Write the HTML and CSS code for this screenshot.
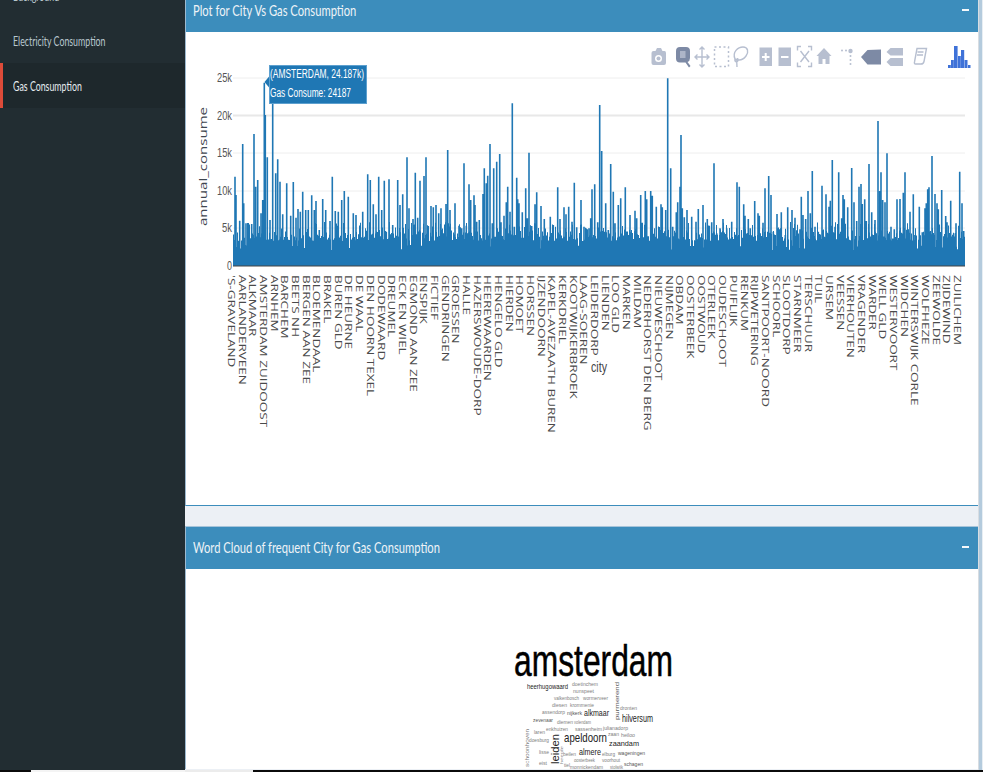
FILE: index.html
```html
<!DOCTYPE html>
<html lang="en">
<head>
  <meta charset="UTF-8" />
  <title>Gas Consumption</title>
  <link rel="stylesheet" href="styles.css">
</head>
<body>
  <div class="app">
    <aside class="sidebar">
      <ul class="menu">
        <li class="menu-item"><span class="menu-label">Background</span></li>
        <li class="menu-item"><span class="menu-label">Electricity Consumption</span></li>
        <li class="menu-item active"><span class="menu-label">Gas Consumption</span></li>
      </ul>
    </aside>

    <main class="content">
      <section class="panel panel-plot">
        <div class="panel-header">
          <h3 class="panel-title">Plot for City Vs Gas Consumption</h3>
          <span class="collapse"></span>
        </div>
        <div class="panel-body">
          <!-- viewBox uses screen coordinates so values can be read off the plot -->
          <svg class="chart" viewBox="186 32 792 473">
            <g class="grid">
              <line x1="233" x2="965" y1="78" y2="78" />
              <line class="grid-strong" x1="233" x2="965" y1="115.5" y2="115.5" />
              <line x1="233" x2="965" y1="153" y2="153" />
              <line x1="233" x2="965" y1="191" y2="191" />
              <line x1="233" x2="965" y1="228" y2="228" />
            </g>
            <path id="bars" class="bars" d="" />
            <line class="baseline" x1="233" x2="965" y1="266" y2="266" />

            <g class="ytick">
              <text x="217" y="82" textLength="15" lengthAdjust="spacingAndGlyphs">25k</text>
              <text x="217" y="120" textLength="15" lengthAdjust="spacingAndGlyphs">20k</text>
              <text x="217" y="157" textLength="15" lengthAdjust="spacingAndGlyphs">15k</text>
              <text x="217" y="195" textLength="15" lengthAdjust="spacingAndGlyphs">10k</text>
              <text x="222" y="232" textLength="10" lengthAdjust="spacingAndGlyphs">5k</text>
              <text x="227" y="270" textLength="5" lengthAdjust="spacingAndGlyphs">0</text>
            </g>
            <text class="axis-title" transform="translate(207 226) rotate(-90) scale(1 0.82)" textLength="119" lengthAdjust="spacingAndGlyphs">annual_consume</text>
            <text class="axis-city" x="591" y="372" textLength="16" lengthAdjust="spacingAndGlyphs">city</text>
            <g id="cities" class="xtick"></g>

            <g class="hover">
              <polygon points="264.5,82 269.5,76 269.5,88" />
              <rect x="269.5" y="65.5" width="97" height="38" />
              <text x="270" y="78" textLength="94" lengthAdjust="spacingAndGlyphs">(AMSTERDAM, 24.187k)</text>
              <text x="270" y="97" textLength="81" lengthAdjust="spacingAndGlyphs">Gas Consume: 24187</text>
            </g>

            <g class="modebar">
              <path d="M651.5 53q0-2 2-2h2l1.5-3h4l1.5 3h2q1.500 0 1.500 2v10q0 2-2 2h-10.500q-2 0-2-2z" />
              <circle class="mb-hole" cx="658.500" cy="58.500" r="3.500" />
              <circle cx="658.500" cy="58.500" r="2" />

              <path class="mb-active" d="M680 47h6q4 0 4 4v7q0 3-2.500 4l3 4-1.500 1.500-3.500-5h-5.500q-4 0-4-4v-7.500q0-4 4-4z" />
              <rect class="mb-lighter" x="680" y="51" width="5.500" height="7" />

              <path class="mb-line" d="M695 57h14M702 47v20M697.500 54.500l-2.500 2.500 2.500 2.500M706.500 54.500l2.500 2.500-2.500 2.500M699.500 49.500l2.500-2.500 2.500 2.500M699.500 64.500l2.500 2.500 2.500-2.500" />
              <rect class="mb-dash" x="714.500" y="47" width="14" height="19.500" />
              <path class="mb-line" d="M735 59c-3-7 3-12 8-12s6 5 3 9-7 5-11 3zM735 59c-1 3 3 4 3 1s-2-1-1 7" />

              <rect x="759.500" y="47.500" width="12.500" height="18.500" />
              <path class="mb-cut" d="M762 57h7.500M765.700 53v8" />
              <rect x="778.500" y="47.500" width="12.500" height="18.500" />
              <path class="mb-cut" d="M781 57h7.500" />

              <path class="mb-line" d="M801 46.500h-3.500v4M808 46.500h3.500v4M801 66.500h-3.500v-4M808 66.500h3.500v-4M800.500 51l8.500 11M809 51l-8.500 11" />
              <path d="M824 48l7.500 8h-2v8h-4v-5h-3v5h-4v-8h-2z" />

              <circle cx="842" cy="50.500" r="1" />
              <circle cx="846" cy="50.500" r="1" />
              <circle cx="850.500" cy="51" r="2.200" />
              <circle cx="850.500" cy="56" r="1" />
              <circle cx="850.500" cy="60" r="1" />
              <circle cx="850.500" cy="64" r="1" />

              <polygon class="mb-active" points="861,57 867.500,50 881,49.500 881,64.500 867.500,64.500" />
              <polygon points="886.500,52 890.500,48 903,48 903,55.500 890.500,55.500" />
              <polygon points="886.500,62 890.500,58 903,58 903,66 890.500,66" />
              <path class="mb-line" d="M917 48.500h9.500l-2.500 13q-.5 2.500-3 2.500h-5.500q-1.500 0-1-2zM917.500 52h6M917 55h6" />

              <g class="mb-logo">
                <rect x="948" y="65" width="2.800" height="3" />
                <rect x="951" y="60" width="2.800" height="8" />
                <rect x="954" y="46" width="3.600" height="22" />
                <rect x="958" y="56" width="2.800" height="12" />
                <rect x="961" y="50" width="3.200" height="18" />
                <rect x="964.500" y="60" width="3" height="8" />
                <rect x="968" y="65" width="2.500" height="3" />
              </g>
            </g>
          </svg>
        </div>
      </section>

      <section class="panel panel-cloud">
        <div class="panel-header">
          <h3 class="panel-title">Word Cloud of frequent City for Gas Consumption</h3>
          <span class="collapse"></span>
        </div>
        <div class="panel-body">
          <svg class="chart" viewBox="186 570 792 200">
            <text class="w0" x="514" y="677" font-size="44" textLength="159" lengthAdjust="spacingAndGlyphs">amsterdam</text>
            <text class="w1" x="527" y="690" font-size="8" textLength="41" lengthAdjust="spacingAndGlyphs">heerhugowaard</text>
            <text class="w3" x="572" y="687" font-size="6" textLength="26" lengthAdjust="spacingAndGlyphs">doetinchem</text>
            <text class="w3" x="573" y="694" font-size="5" textLength="21" lengthAdjust="spacingAndGlyphs">nunspeet</text>
            <text class="w3" x="554" y="701" font-size="5" textLength="25" lengthAdjust="spacingAndGlyphs">valkenbosch</text>
            <text class="w3" x="583" y="701" font-size="5" textLength="25" lengthAdjust="spacingAndGlyphs">wormerveer</text>
            <text class="w3" x="552" y="708" font-size="5" textLength="15" lengthAdjust="spacingAndGlyphs">diesen</text>
            <text class="w3" x="570" y="708" font-size="5" textLength="24" lengthAdjust="spacingAndGlyphs">krommenie</text>
            <text class="w3" x="542" y="715" font-size="5" textLength="23" lengthAdjust="spacingAndGlyphs">assendorp</text>
            <text class="w2" x="567" y="716" font-size="6" textLength="15" lengthAdjust="spacingAndGlyphs">nijkerk</text>
            <text class="w1" x="584" y="717" font-size="9" textLength="25" lengthAdjust="spacingAndGlyphs">alkmaar</text>
            <text class="w3" x="620" y="711" font-size="5" textLength="17" lengthAdjust="spacingAndGlyphs">dronten</text>
            <text class="w1" x="622" y="723" font-size="10" textLength="31" lengthAdjust="spacingAndGlyphs">hilversum</text>
            <text class="w2" x="533" y="723" font-size="5" textLength="20" lengthAdjust="spacingAndGlyphs">zevenaar</text>
            <text class="w3" x="557" y="725" font-size="5" textLength="16" lengthAdjust="spacingAndGlyphs">diemen</text>
            <text class="w3" x="574" y="725" font-size="5" textLength="17" lengthAdjust="spacingAndGlyphs">volendam</text>
            <text class="w3" x="546" y="732" font-size="5" textLength="22" lengthAdjust="spacingAndGlyphs">enkhuizen</text>
            <text class="w3" x="575" y="732" font-size="5" textLength="27" lengthAdjust="spacingAndGlyphs">sassenheim</text>
            <text class="w3" x="603" y="731" font-size="5" textLength="25" lengthAdjust="spacingAndGlyphs">julianadorp</text>
            <text class="w3" x="534" y="735" font-size="5" textLength="11" lengthAdjust="spacingAndGlyphs">laren</text>
            <text class="w3" x="529" y="743" font-size="5" textLength="20" lengthAdjust="spacingAndGlyphs">doesburg</text>
            <text class="w1" x="564" y="743" font-size="13" textLength="43" lengthAdjust="spacingAndGlyphs">apeldoorn</text>
            <text class="w3" x="608" y="737" font-size="5" textLength="11" lengthAdjust="spacingAndGlyphs">zaan</text>
            <text class="w3" x="621" y="738" font-size="5" textLength="14" lengthAdjust="spacingAndGlyphs">heiloo</text>
            <text class="w1" x="609" y="747" font-size="8" textLength="30" lengthAdjust="spacingAndGlyphs">zaandam</text>
            <text class="w3" x="539" y="755" font-size="5" textLength="10" lengthAdjust="spacingAndGlyphs">lisse</text>
            <text class="w3" x="563" y="757" font-size="5" textLength="13" lengthAdjust="spacingAndGlyphs">beilen</text>
            <text class="w1" x="579" y="756" font-size="9" textLength="22" lengthAdjust="spacingAndGlyphs">almere</text>
            <text class="w3" x="602" y="757" font-size="5" textLength="13" lengthAdjust="spacingAndGlyphs">elburg</text>
            <text class="w2" x="618" y="756" font-size="6" textLength="27" lengthAdjust="spacingAndGlyphs">wageningen</text>
            <text class="w3" x="539" y="766" font-size="5" textLength="8" lengthAdjust="spacingAndGlyphs">eist</text>
            <text class="w3" x="574" y="763" font-size="5" textLength="21" lengthAdjust="spacingAndGlyphs">oosterbeek</text>
            <text class="w3" x="602" y="763" font-size="5" textLength="18" lengthAdjust="spacingAndGlyphs">voorhout</text>
            <text class="w2" x="624" y="767" font-size="5" textLength="19" lengthAdjust="spacingAndGlyphs">schagen</text>
            <text class="w3" x="564" y="768" font-size="5" textLength="6" lengthAdjust="spacingAndGlyphs">tiel</text>
            <text class="w3" x="570" y="770" font-size="5" textLength="33" lengthAdjust="spacingAndGlyphs">monnickendam</text>
            <text class="w3" x="610" y="770" font-size="5" textLength="13" lengthAdjust="spacingAndGlyphs">stolwijk</text>
            <text class="w2" x="619" y="721" font-size="6" transform="rotate(-90 619 721)" textLength="38" lengthAdjust="spacingAndGlyphs">purmerend</text>
            <text class="w1" x="559" y="765" font-size="10" transform="rotate(-90 559 765)" textLength="30" lengthAdjust="spacingAndGlyphs">leiden</text>
            <text class="w3" x="529" y="768" font-size="5" transform="rotate(-90 529 768)" textLength="38" lengthAdjust="spacingAndGlyphs">schoonhoven</text>
            <text class="w3" x="563" y="765" font-size="4" transform="rotate(-90 563 765)" textLength="18" lengthAdjust="spacingAndGlyphs">heerde</text>
          </svg>
        </div>
      </section>
    </main>

    <div class="scrollbar"></div>
  </div>

  <div class="page-edge">
    <span class="edge-dark"></span>
    <span class="edge-light"></span>
    <span class="edge-grey"></span>
    <span class="edge-rest"></span>
  </div>

  <script src="chart.js"></script>
</body>
</html>
```

FILE: styles.css
```css
* {
  box-sizing: border-box;
}

html,
body {
  margin: 0;
  padding: 0;
  height: 772px;
  overflow: hidden;
  background-color: #ecf0f5;
  font-family: "Lato", "Liberation Sans", sans-serif;
}

.app {
  display: flex;
  height: 770px;
  overflow: hidden;
}

.sidebar {
  width: 185px;
  flex: none;
  background-color: #222d32;
}

.menu {
  list-style: none;
  margin: -27px 0 0;
  padding: 0;
}

.menu-item {
  height: 45px;
  display: flex;
  align-items: center;
  border-left: 3px solid transparent;
  padding-left: 10px;
  color: #b8c7ce;
  font-size: 14px;
}

.menu-item.active {
  background-color: #1e282c;
  border-left-color: #dd4b39;
  color: #e6ecef;
}

/* the whole capture is squeezed sideways, text has to follow */
.menu-label,
.panel-title {
  display: inline-block;
  white-space: nowrap;
  transform-origin: left center;
}

.menu-label {
  transform: scaleX(0.63);
}

.panel-title {
  transform: scaleX(0.7);
}

.content {
  flex: 1;
  min-width: 0;
}

.panel {
  background-color: #fff;
  border-left: 1px solid #9db9cf;
}

.panel-plot {
  margin-top: -10px;
  height: 516px;
  border-bottom: 1px solid #3c8dbc;
}

.panel-cloud {
  margin-top: 20px;
  border-top: 1px solid #a6c4da;
}

.panel-header {
  height: 42px;
  background-color: #3c8dbc;
  color: #fff;
  display: flex;
  align-items: center;
  justify-content: space-between;
  padding: 0 9px 3px 7px;
}

.panel-title {
  margin: 0;
  font-size: 16px;
  font-weight: 400;
  color: #eef3f7;
}

.collapse {
  width: 7px;
  height: 2px;
  background-color: #f4f8fb;
}

.chart {
  display: block;
  width: 792px;
}

.panel-plot .chart {
  height: 473px;
}

.panel-cloud .chart {
  height: 200px;
}

.chart text {
  font-family: "Liberation Sans", sans-serif;
}

.grid line {
  stroke: #eeeeee;
  stroke-width: 1;
}

.grid .grid-strong {
  stroke: #e8e8e8;
  stroke-width: 2;
}

.bars {
  fill: #1f77b4;
}

.baseline {
  stroke: #444;
  stroke-width: 1;
}

.ytick text {
  font-size: 12px;
  fill: #555;
}

.chart .axis-title {
  font-family: "Open Sans", sans-serif;
  font-size: 13px;
  fill: #3f4650;
}

.axis-city {
  font-size: 14px;
  fill: #444;
}

.chart .xtick text {
  font-family: "Open Sans", sans-serif;
  font-size: 12px;
  fill: #4a4a4a;
}

.hover polygon,
.hover rect {
  fill: #1f77b4;
  stroke: #5da0cf;
  stroke-width: 1;
}

.hover polygon {
  stroke: none;
}

.hover text {
  font-size: 12px;
  fill: #fff;
}

.modebar {
  fill: #b7bfd0;
}

.modebar .mb-active {
  fill: #7d8aa5;
}

.modebar .mb-lighter {
  fill: #adb5c8;
}

.modebar .mb-hole {
  fill: #fff;
}

.mb-line {
  fill: none;
  stroke: #b7bfd0;
  stroke-width: 1.4;
}

.mb-dash {
  fill: none;
  stroke: #b7bfd0;
  stroke-width: 1.5;
  stroke-dasharray: 2 2.5;
}

.mb-cut {
  fill: none;
  stroke: #fff;
  stroke-width: 2;
}

.modebar .mb-logo {
  fill: #3f72d8;
}

.w0 {
  fill: #000;
  stroke: #000;
  stroke-width: 0.5;
}

.w1 {
  fill: #222;
}

.w2 {
  fill: #555;
}

.w3 {
  fill: #808080;
}

.scrollbar {
  width: 5px;
  flex: none;
  background-color: #b4cbdd;
  border-left: 1px solid #d8dde2;
  border-right: 1px solid #e8eef3;
}

.page-edge {
  display: flex;
  height: 2px;
  background-color: #0b0b0b;
}

.edge-dark {
  width: 31px;
  background-color: #0b0b0b;
}

.edge-light {
  width: 154px;
  background-color: #f4f4f4;
}

.edge-grey {
  width: 68px;
  background-color: #ececec;
}

.edge-rest {
  flex: 1;
  background-color: #0b0b0b;
}
```

FILE: chart.js
```js
const cities = [
  "'S-GRAVELAND", "AARLANDERVEEN", "ALKMAAR", "AMSTERDAM ZUIDOOST", "ARNHEM", "BARCHEM",
  "BEETS NH", "BERGEN AAN ZEE", "BLOEMENDAAL", "BRAKEL", "BUREN GLD", "DE HEURNE", "DE WAAL",
  "DEN HOORN TEXEL", "DODEWAARD", "DREUMEL", "ECK EN WIEL", "EGMOND AAN ZEE", "ENSPIJK",
  "FICTIEF", "GENDRINGEN", "GROESSEN", "HALLE", "HAZERSWOUDE-DORP", "HEEREWAARDEN",
  "HENGELO GLD", "HIERDEN", "HOMOET", "HORSSEN", "IJZENDOORN", "KAPEL-AVEZAATH BUREN",
  "KERKDRIEL", "KOOTWIJKERBROEK", "LAAG-SOEREN", "LEIDERDORP", "LIENDEN", "LOO GLD", "MARKEN",
  "MILDAM", "NEDERHORST DEN BERG", "NIEUWESCHOOT", "NIJMEGEN", "OBDAM", "OOSTERBEEK",
  "OOSTWOUD", "OTERLEEK", "OUDESCHOOT", "PUIFLIJK", "RENKUM", "RIJPWETERING",
  "SANTPOORT-NOORD", "SCHOORL", "SLOOTDORP", "STARNMEER", "TERSCHUUR", "TUIL", "URSEM",
  "VEESSEN", "VIERHOUTEN", "VRAGENDER", "WARDER", "WELL GLD", "WESTERVOORT", "WIDCHEN",
  "WINTERSWIJK CORLE", "WOLFHEZE", "ZEEWOLDE", "ZIJDEWIND", "ZUILICHEM"
];

// peaks read off the plot: [x, top] pairs in 3x crops, each with its crop origin
const peakStrips = [
  [225, [25,435,30,320,33,375,44,452,53,222,56,400,63,460,72,480,80,462,87,192,92,350,98,330,108,430,113,390,118,38,121,135,127,262,135,450,143,100,152,310,158,268,165,335,173,433,185,340,197,437,205,336,213,443,219,417,226,425,233,365,242,420,250,420,260,376,268,420,273,393,283,480,293,387,302,420,315,453,322,320,331,423,340,425,350,390,358,363,370,380,385,430,393,435,403,510,413,425,428,313,436,330,445,403,453,433,461,320,470,420,478,332,484,485,492,328,503,465,518,330,525,405,533,373,546,262,552,415,564,447,571,308,578,443,585,332,597,318,603,262,610,468,618,408,625,412,633,405,641,430,648,415,663,402,668,240,675,420,690,400,702,467,710,475,717,280,724,467,732,343,737,390,747,376]],
  [475, [0,405,5,455,13,450,24,372,28,295,34,340,38,317,45,222,52,460,56,295,65,275,74,252,78,457,87,437,94,397,98,350,105,425,112,100,118,470,125,323,128,388,132,400,142,427,152,355,157,445,162,248,170,468,180,403,185,367,198,408,208,447,213,507,226,440,235,465,248,352,255,447,267,412,273,433,281,410,291,455,298,338,305,472,318,390,327,470,342,475,347,445,351,358,359,343,368,457,374,105,380,243,392,400,400,480,407,282,415,365,420,460,430,405,437,385,451,352,465,435,480,422,485,445,497,375,511,363,515,388,527,363,532,377,544,410,558,403,562,412,572,420,578,25,587,295,593,470,604,427,608,397,615,350,618,195,622,415,628,442,636,420,650,440,663,455,670,417,684,405,697,447,703,467,710,457,717,280,725,490,735,475,744,447]],
  [725, [5,475,20,455,36,337,43,350,56,403,60,437,70,447,76,475,89,393,99,430,103,437,114,458,120,355,131,318,138,375,145,485,156,432,169,427,181,495,188,412,201,420,210,443,225,478,229,380,234,435,242,447,249,363,256,430,262,303,270,470,280,485,291,347,303,373,312,410,316,392,322,270,330,470,341,307,350,445,354,375,358,388,368,412,380,294,387,397,395,453,402,350,408,342,412,402,419,388,424,453,432,282,440,427,450,450,459,153,464,363,468,307,473,390,480,397,486,250,498,470,508,478,516,388,525,387,535,368,540,307,549,485,555,425,565,373,570,495,583,410,592,487,600,415,604,400,608,358,612,352,621,258,630,372,636,400,640,418,650,360,662,438,666,457,677,392,686,490,693,460,704,305,711,400,716,483]]
];

const baseY = 266;
const left = 233;
const right = 965;

let seed = 4187;
function rnd() {
  seed = (seed * 1103515245 + 12345) % 2147483648;
  return seed / 2147483648;
}

function barPath(x, top, width) {
  return `M${x} ${top}V${baseY}h${width}V${top}Z`;
}

let d = "";

// the dense floor of small values
for (let x = left; x < right; x++) {
  const r = rnd();
  let top = 231 + rnd() * 10;
  if (r > 0.72) top = 222 + rnd() * 9;
  if (r < 0.05) top = 245 + rnd() * 5;
  d += barPath(x, top.toFixed(1), 1);
}

peakStrips.forEach(([origin, pts]) => {
  for (let i = 0; i < pts.length; i += 2) {
    const x = origin + pts[i] / 3 - 0.8;
    const top = 70 + pts[i + 1] / 3;
    if (x >= left) d += barPath(x.toFixed(1), top.toFixed(1), 1.6);
  }
});

document.getElementById("bars").setAttribute("d", d);

const cityGroup = document.getElementById("cities");
const step = 726 / (cities.length - 1);

cities.forEach((name, i) => {
  const label = document.createElementNS("http://www.w3.org/2000/svg", "text");
  const x = (228 + i * step).toFixed(1);
  label.setAttribute("transform", `translate(${x} 275) rotate(90) scale(1.125 0.8)`);
  label.textContent = name;
  cityGroup.appendChild(label);
});
```
